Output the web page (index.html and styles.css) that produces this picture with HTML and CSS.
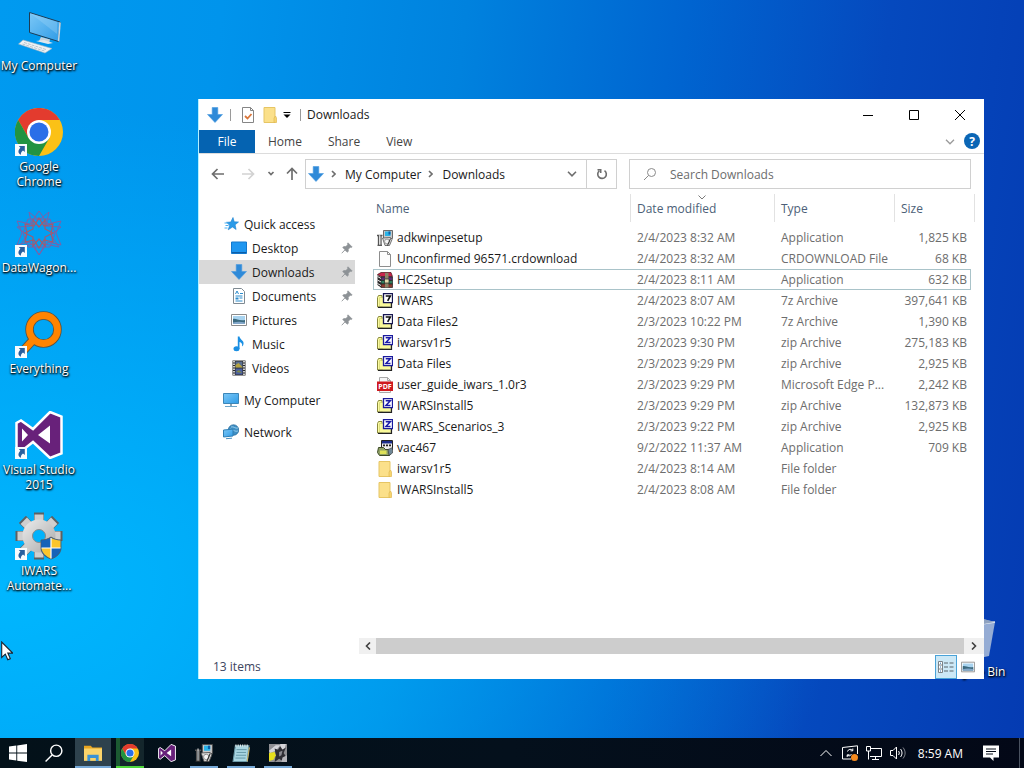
FILE: index.html
```html
<!DOCTYPE html>
<html lang="en">
  <head>
    <meta charset="UTF-8" />
    <meta name="viewport" content="width=device-width, initial-scale=1.0" />
    <title>Downloads</title>
    <link rel="stylesheet" href="styles.css">
  </head>
  <body>
    <!-- Shared icons -->
    <svg class="sprite" width="0" height="0" aria-hidden="true">
      <defs>
        <linearGradient id="screen" x1="0" y1="0" x2="1" y2="1">
          <stop offset="0" stop-color="#7cc8f7" />
          <stop offset="1" stop-color="#2f9be6" />
        </linearGradient>
        <linearGradient id="steel" x1="0" y1="0" x2="1" y2="1">
          <stop offset="0" stop-color="#e2e2e2" />
          <stop offset="1" stop-color="#b4b4b4" />
        </linearGradient>
      </defs>
      <symbol id="i-down" viewBox="0 0 16 16">
        <path d="M5.200 0.500h5.600v7h4.700L8 15.500 0.500 7.500h4.700z" fill="#2f8ad8" stroke="#4a9be0" stroke-width=".6" />
      </symbol>
      <symbol id="i-folder" viewBox="0 0 16 16">
        <path d="M2 0.500h11v15H2z" fill="#fbe08a" stroke="#e6c564" />
        <path d="M12 15.500V11l1.500-2 1 2v4.500z" fill="#f7d56e" stroke="#dfb954" stroke-width=".7" />
      </symbol>
      <symbol id="i-page" viewBox="0 0 16 16">
        <path d="M2.500 0.500h8l3 3v12h-11z" fill="#fdfdfd" stroke="#8d8d8d" />
        <path d="M10.500 0.500v3h3" fill="none" stroke="#8d8d8d" />
      </symbol>
      <symbol id="i-archive" viewBox="0 0 16 16">
        <path d="M0.500 4.500l1-2h3.500v11.500H0.500z" fill="#fbfba0" stroke="#8a8a3c" />
        <path d="M2.500 4.500h11v9h-11z" fill="#fafa9a" stroke="#c9c96c" stroke-width=".6" />
        <path d="M1 14.300h13.500V10" fill="none" stroke="#222" stroke-width="1.200" />
        <path d="M6.500 0.700h9v9h-9z" fill="#fff" stroke="currentColor" stroke-width="1.300" />
      </symbol>
      <symbol id="i-7z" viewBox="0 0 16 16">
        <use href="#i-archive" color="#161650" />
        <path d="M8.700 3h4.600L10.700 7.800" fill="none" stroke="#111" stroke-width="1.600" />
      </symbol>
      <symbol id="i-zip" viewBox="0 0 16 16">
        <use href="#i-archive" color="#1a1a9c" />
        <path d="M8.700 2.800h4.600L8.900 7.600h4.600" fill="none" stroke="#1a1aa8" stroke-width="1.500" />
      </symbol>
      <symbol id="i-setup" viewBox="0 0 16 16">
        <path d="M6.500 0.500h9v8h-9z" fill="#c8c8c8" stroke="#4b4b4b" stroke-width=".8" />
        <path d="M8 1.500h5.500v4.500H8z" fill="#2ab4e8" />
        <path d="M11.500 1.500h2v3h-2z" fill="#0b5ea8" />
        <path d="M0 5.500h5.500M1.500 5.500v9.500M4 5.500v9.500" fill="none" stroke="#555" stroke-width="1.300" />
        <path d="M2.700 4v11" stroke="#ddd" />
        <path d="M5.500 8l8-.5 1.500 2-2.500 6H8z" fill="#dcdcdc" stroke="#555" stroke-width=".8" />
        <circle cx="10" cy="11.500" r="2.400" fill="#f6f6f6" stroke="#888" stroke-width=".8" />
        <path d="M13.500 8.500l-3 7M0.500 15.300h4.500" fill="none" stroke="#333" />
      </symbol>
      <symbol id="i-rar" viewBox="0 0 16 16">
        <path d="M0.500 2.500L4 0.500h10l1.500 4H4z" fill="#c8234c" stroke="#411" stroke-width=".7" />
        <path d="M4 5h11.500v3.500H4z" fill="#5b2d72" stroke="#222" stroke-width=".7" />
        <path d="M4 8.500h11.500V12H4z" fill="#2f7d5c" stroke="#222" stroke-width=".7" />
        <path d="M4 12h11.500v3.500H4z" fill="#8a3a30" stroke="#222" stroke-width=".7" />
        <path d="M0.500 3L4 5v10.500L0.500 13z" fill="#262626" />
        <path d="M0.500 4.500l3.500 2M0.500 8l3.500 2M0.500 11.500l3.500 2" stroke="#eee" />
        <path d="M8 1h3.500v14.500H8z" fill="#8b8468" />
        <path d="M7.500 7h4.500v4H7.500z" fill="#e2dcae" stroke="#222" stroke-width=".7" />
      </symbol>
      <symbol id="i-vac" viewBox="0 0 16 16">
        <path d="M4.500 0.500h11v9h-11z" fill="#eee" stroke="#222" />
        <path d="M5 1h10v2.500H5z" fill="#1b2c8a" />
        <path d="M6 5.300h8.500" stroke="#222" stroke-width="1.800" stroke-dasharray="2 1" />
        <path d="M1.500 7.500h5l2 2h5.500v3l-1.500 3H2.500l-2-3z" fill="#8fa064" stroke="#3d4a26" />
        <path d="M3 10.500h6.500V14H3z" fill="#dfe25a" />
        <path d="M11 9.500l4.500-2V13L12 15.500z" fill="#6f8796" stroke="#333" stroke-width=".6" />
      </symbol>
      <symbol id="i-picture" viewBox="0 0 16 16">
        <path d="M0.500 2.500h15v11H0.500z" fill="#fff" stroke="#8b8b8b" />
        <path d="M2 4h12v8H2z" fill="#a8d3ef" />
        <path d="M2 7c3-1 5 2 12 1v4H2z" fill="#3c6a7f" />
        <path d="M2 10.500c4-1 8-1 12 0V12H2z" fill="#83a7c9" />
      </symbol>
      <symbol id="i-pin" viewBox="0 0 12 12">
        <path d="M7 0.800L11.200 5l-1 .6-.9-.3-2 2 .1 2-1.200 1L3.900 8 0.800 11.200 4 7.800 1.700 5.600l1-1.100 2.100.1 1.900-1.900-.3-1z" fill="#8d9296" stroke="#8d9296" stroke-width=".6" />
      </symbol>
      <symbol id="i-link" viewBox="0 0 12 12">
        <path d="M0 0h12v12H0z" fill="#f8fbfe" />
        <path d="M3.800 2h6v6L8 6.400C6.300 7.600 5.600 9 6 10.800 2.800 9.500 2.700 6.500 5.400 3.800z" fill="#2a5f9e" />
      </symbol>
      <symbol id="i-chrome" viewBox="0 0 48 48">
        <circle cx="24" cy="24" r="24" fill="#fbc116" />
        <path d="M24 12h20.800A24 24 0 0 0 3.200 12L13.600 30z" fill="#e33b2e" />
        <path d="M3.200 12A24 24 0 0 0 24 48L34.400 30 24 34 13.600 30z" fill="#229342" />
        <circle cx="24" cy="24" r="12" fill="#fff" />
        <circle cx="24" cy="24" r="9.500" fill="#2a6fe8" />
      </symbol>
      <symbol id="i-vs" viewBox="0 0 48 48">
        <path d="M35 1l11.500 4.500v37L35 47 18 31 6 40.500 1.500 38V12L6 9.500 18 18z" fill="#68217a" stroke="#fff" stroke-width="2.500" />
        <path d="M35 14.500v18L23 24zM7 17.500v13l6-6.500z" fill="#fff" />
      </symbol>
      <symbol id="i-computer" viewBox="0 0 16 16">
        <path d="M0.500 1.500h15v10H0.500z" fill="url(#screen)" stroke="#3c86b8" />
        <path d="M7 12h2v2H7z" fill="#8fa3b0" />
        <path d="M2 14.500h12" stroke="#70a6c8" />
      </symbol>
      <symbol id="i-tooth" viewBox="0 0 48 48">
        <path d="M19 0.500h10v11H19z" fill="#5d6062" />
        <path d="M19.500 2.500h9V12h-9z" fill="#cfcfcf" />
      </symbol>
    </svg>

    <main class="desktop">
      <!-- Desktop shortcuts -->
      <nav class="shortcuts">
        <a class="shortcut" href="#">
          <svg viewBox="0 0 48 48">
            <path d="M14.500 5.500l30.500 9.500-1.500 19.500L14.500 25.500z" fill="url(#screen)" stroke="#1d3c55" />
            <path d="M44.300 15l1.500.8-1.500 18.800-1.500-.6z" fill="#c9d8e2" />
            <path d="M15 6l27 21V15z" fill="#a8daf9" opacity=".3" />
            <path d="M26 30l9 2.500-1 4-10-2.500z" fill="#c7d3dc" />
            <path d="M21 34l12 3 5-1-9-3z" fill="#dfe7ec" />
            <path d="M8 33l29 8.500-7 4.500L3.500 37z" fill="#eef2f5" stroke="#9fb1bf" stroke-width=".6" />
            <path d="M9 35.500l22 7M7.500 37l22 7" stroke="#aab7c1" stroke-width=".8" stroke-dasharray="3 1" />
          </svg>
          <span>My Computer</span>
        </a>
        <a class="shortcut" href="#">
          <svg viewBox="0 0 48 48"><use href="#i-chrome" /><use href="#i-link" y="36" width="12" height="12" /></svg>
          <span>Google Chrome</span>
        </a>
        <a class="shortcut" href="#">
          <svg viewBox="0 0 48 48">
            <g fill="none" stroke="#7b62a8" stroke-width="1">
              <path d="M24 2l9 13 13-3-5 12 5 12-13-3-9 13-9-13-13 3 5-12-5-12 13 3z" />
              <path d="M2 18l15-1L14 3l10 8 10-8-3 14 15 1-10 8 8 12-14-3-6 11-6-11-14 3 8-12z" />
              <path d="M13 10h22l5 14-5 14H13L8 24z" />
            </g>
            <g fill="none" stroke="#a4596f" stroke-width="1.200">
              <path d="M24 9l5 8 9-2-2 9 2 9-9-2-5 8-5-8-9 2 2-9-2-9 9 2z" />
              <path d="M18 11l6 7 6-7 0 9 8 4-8 4v9l-6-7-6 7v-9l-8-4 8-4z" />
            </g>
            <use href="#i-link" y="36" width="12" height="12" />
          </svg>
          <span>DataWagon...</span>
        </a>
        <a class="shortcut" href="#">
          <svg viewBox="0 0 48 48">
            <path d="M18 30L7 42" stroke="#5c5340" stroke-width="9" />
            <circle cx="28.500" cy="19.500" r="14" fill="none" stroke="#5c5340" stroke-width="8.500" />
            <circle cx="28.500" cy="19.500" r="14" fill="none" stroke="#ff8400" stroke-width="6.800" />
            <path d="M20 28L7 42" stroke="#ff8400" stroke-width="7" />
            <use href="#i-link" y="36" width="12" height="12" />
          </svg>
          <span>Everything</span>
        </a>
        <a class="shortcut" href="#">
          <svg viewBox="0 0 48 48"><use href="#i-vs" /><use href="#i-link" y="36" width="12" height="12" /></svg>
          <span>Visual Studio 2015</span>
        </a>
        <a class="shortcut" href="#">
          <svg viewBox="0 0 48 48">
            <use href="#i-tooth" />
            <use href="#i-tooth" transform="rotate(45 24 24)" />
            <use href="#i-tooth" transform="rotate(90 24 24)" />
            <use href="#i-tooth" transform="rotate(135 24 24)" />
            <use href="#i-tooth" transform="rotate(180 24 24)" />
            <use href="#i-tooth" transform="rotate(225 24 24)" />
            <use href="#i-tooth" transform="rotate(270 24 24)" />
            <use href="#i-tooth" transform="rotate(315 24 24)" />
            <circle cx="24" cy="24" r="11.500" fill="none" stroke="url(#steel)" stroke-width="10" />
            <circle cx="24" cy="24" r="6.500" fill="none" stroke="#8a8a8a" />
            <path d="M36 25c3 2 6 3 10 3v8c0 5-4 9-10 11-6-2-10-6-10-11v-8c4 0 7-1 10-3z" fill="#1763b8" stroke="#555" stroke-width=".8" />
            <path d="M26.500 28.500c3.500 0 6.500-1 9.500-2.500v10h-9.500zM36 36h9.500c-.5 5-4.500 8.500-9.500 10.500z" fill="#1763b8" />
            <path d="M36 26c3 1.500 6 2.500 9.500 2.500V36H36zM36 36v10.500c-5-2-9-5.500-9.500-10.500z" fill="#fbc52d" />
            <path d="M36 26v20.500M26.500 36h19" stroke="#fff" stroke-width="1.200" />
            <use href="#i-link" y="36" width="12" height="12" />
          </svg>
          <span>IWARS Automate...</span>
        </a>
      </nav>

      <a class="shortcut recycle" href="#">
        <svg viewBox="0 0 48 48">
          <path d="M8 8l17-4 20 5-6 34-14 3-11-3z" fill="#b9c8dc" opacity=".8" />
          <path d="M8 8l17 4 20-3" fill="none" stroke="#e8eef6" stroke-width="1.500" />
          <path d="M25 4l20 5-17 3z" fill="#8fa2c0" />
        </svg>
        <span>Recycle Bin</span>
      </a>

      <!-- Explorer window -->
      <section class="window">
        <header class="titlebar">
          <svg class="icon"><use href="#i-down" /></svg>
          <span class="sep"></span>
          <button class="quick" aria-label="Properties">
            <svg class="icon" viewBox="0 0 16 16">
              <path d="M2.500 0.500h8l3 3v12h-11z" fill="#fff" stroke="#858585" />
              <path d="M10.500 0.500v3h3" fill="none" stroke="#858585" />
              <path d="M5 9l2.500 2.500L11.500 7" fill="none" stroke="#d9763a" stroke-width="1.800" />
            </svg>
          </button>
          <button class="quick" aria-label="New folder"><svg class="icon"><use href="#i-folder" /></svg></button>
          <button class="customize" aria-label="Customize toolbar">
            <svg width="8" height="6" viewBox="0 0 8 6"><path d="M0.500 0.500h7" stroke="#000" /><path d="M0.500 2.500h7L4 6z" /></svg>
          </button>
          <span class="sep"></span>
          <h1>Downloads</h1>
          <div class="controls">
            <button aria-label="Minimize"><svg width="10" height="10" viewBox="0 0 10 10"><path d="M0 5.500h10" /></svg></button>
            <button aria-label="Maximize"><svg width="10" height="10" viewBox="0 0 10 10"><path d="M0.500 0.500h9v9h-9z" /></svg></button>
            <button aria-label="Close"><svg width="10" height="10" viewBox="0 0 10 10"><path d="M0 0l10 10M10 0L0 10" /></svg></button>
          </div>
        </header>

        <div class="tabs">
          <button class="file-tab">File</button>
          <button>Home</button>
          <button>Share</button>
          <button>View</button>
          <button class="expand" aria-label="Expand the ribbon">
            <svg width="10" height="6" viewBox="0 0 10 6"><path d="M1 0.800l4 4 4-4" /></svg>
          </button>
          <button class="help" aria-label="Help">?</button>
        </div>

        <div class="navbar">
          <button class="nav" aria-label="Back"><svg width="14" height="12" viewBox="0 0 14 12"><path d="M13 6H1.500M6.500 1l-5 5 5 5" /></svg></button>
          <button class="nav off" aria-label="Forward"><svg width="14" height="12" viewBox="0 0 14 12"><path d="M1 6h11.500M7.500 1l5 5-5 5" /></svg></button>
          <button class="nav recent" aria-label="Recent locations"><svg width="8" height="6" viewBox="0 0 8 6"><path d="M1.500 1L4 3.500 6.500 1" /></svg></button>
          <button class="nav up" aria-label="Up"><svg width="12" height="14" viewBox="0 0 12 14"><path d="M6 13V1.500M1 6.500l5-5 5 5" /></svg></button>
          <div class="address">
            <svg class="icon"><use href="#i-down" /></svg>
            <svg class="crumb" width="5" height="8" viewBox="0 0 5 8"><path d="M1 1l3 3-3 3" /></svg>
            <a href="#">My Computer</a>
            <svg class="crumb" width="5" height="8" viewBox="0 0 5 8"><path d="M1 1l3 3-3 3" /></svg>
            <a href="#">Downloads</a>
            <button class="drop" aria-label="Previous locations"><svg width="10" height="6" viewBox="0 0 10 6"><path d="M1 0.800l4 4 4-4" /></svg></button>
            <button class="refresh" aria-label="Refresh">
              <svg width="12" height="12" viewBox="0 0 12 12"><path d="M8.500 2.600A4.300 4.300 0 1 1 3.300 2.800M1.500 1.700h3.200v3.200" /></svg>
            </button>
          </div>
          <div class="search">
            <svg width="14" height="14" viewBox="0 0 14 14"><circle cx="8.500" cy="5.500" r="4" /><path d="M5.500 8.500L1 13" /></svg>
            <input type="search" placeholder="Search Downloads" aria-label="Search Downloads" />
          </div>
        </div>

        <div class="content">
          <nav class="sidebar">
            <a class="root" href="#">
              <svg class="icon" viewBox="0 0 16 16">
                <path d="M10 1.500l1.200 4.300 4.300.2-3.400 2.800 1 4.700L9.500 11l-4.300 2.800 1.500-4.500L3.500 6.300l4.300-.3z" fill="#2b9be8" stroke="#1d80cc" stroke-width=".6" />
                <path d="M1.500 7h4M2.500 9.500h3M1.500 12h3" stroke="#4aaef0" />
              </svg>
              Quick access
            </a>
            <a href="#">
              <svg class="icon" viewBox="0 0 16 16"><path d="M0.500 2h15v11.500h-15z" fill="#1e96f0" stroke="#1478cc" /><path d="M1 12.500h14" stroke="#0d5ea8" /></svg>
              Desktop
              <svg class="pin"><use href="#i-pin" /></svg>
            </a>
            <a class="current" href="#">
              <svg class="icon"><use href="#i-down" /></svg>
              Downloads
              <svg class="pin"><use href="#i-pin" /></svg>
            </a>
            <a href="#">
              <svg class="icon" viewBox="0 0 16 16">
                <path d="M2.500 0.500h8l3 3v12h-11z" fill="#fff" stroke="#7f8a92" />
                <path d="M4.500 6L6 3l1.500 3M9 5.500h3M4.500 8h7M8.500 10h3M4.500 13h7" stroke="#2d8ccc" fill="none" />
                <path d="M4.500 9.500h3v2h-3z" fill="#2d8ccc" />
              </svg>
              Documents
              <svg class="pin"><use href="#i-pin" /></svg>
            </a>
            <a href="#">
              <svg class="icon"><use href="#i-picture" /></svg>
              Pictures
              <svg class="pin"><use href="#i-pin" /></svg>
            </a>
            <a href="#">
              <svg class="icon" viewBox="0 0 16 16">
                <ellipse cx="5.500" cy="12.800" rx="3" ry="2.500" fill="#1a8fe3" />
                <path d="M6.800 0.500h1.700c.5 3.300 4.800 4 4 7.500-.3 1.500-.8 2-1.500 2.500.7-2.500-.5-4-2.500-4.500v7H6.800z" fill="#1a8fe3" />
              </svg>
              Music
            </a>
            <a href="#">
              <svg class="icon" viewBox="0 0 16 16">
                <path d="M1.500 0.500h13v15h-13z" fill="#2b2b2b" />
                <path d="M3 1v14M13 1v14" stroke="#fff" stroke-width="1.500" stroke-dasharray="1.500 1" />
                <path d="M4.500 1.500h7v6h-7z" fill="#5a6f8f" />
                <path d="M4.500 5l3-2 4 4v.5h-7z" fill="#b6a33f" />
                <path d="M4.500 8.500h7v6h-7z" fill="#4a5fa0" />
                <path d="M5 12l3-2 3 3z" fill="#7d8a4a" />
              </svg>
              Videos
            </a>
            <a class="root place" href="#">
              <svg class="icon"><use href="#i-computer" /></svg>
              My Computer
            </a>
            <a class="root place" href="#">
              <svg class="icon" viewBox="0 0 16 16">
                <circle cx="10.500" cy="6" r="5.200" fill="#3f8fc4" stroke="#2a6f9f" stroke-width=".8" />
                <path d="M8 3c3-1 4 2 7 1M7 5c4 1 5 3 8 2" fill="none" stroke="#a9dbf5" stroke-width=".8" />
                <path d="M0.500 6l9.500-.8v6.800l-9.500 1z" fill="url(#screen)" stroke="#2f7fb5" />
                <path d="M3 14.700l6-.5" stroke="#4a90c0" />
              </svg>
              Network
            </a>
          </nav>

          <div class="files">
            <table>
              <colgroup>
                <col />
                <col class="col-date" />
                <col class="col-type" />
                <col class="col-size" />
                <col class="col-end" />
              </colgroup>
              <thead>
                <tr>
                  <th>Name</th>
                  <th class="sorted">
                    Date modified
                    <svg width="8" height="5" viewBox="0 0 8 5"><path d="M0.500 0.500L4 4 7.500 0.500" /></svg>
                  </th>
                  <th>Type</th>
                  <th colspan="2">Size</th>
                </tr>
              </thead>
              <tbody>
                <tr><td><svg class="icon"><use href="#i-setup" /></svg>adkwinpesetup</td><td>2/4/2023 8:32 AM</td><td>Application</td><td>1,825 KB</td></tr>
                <tr><td><svg class="icon"><use href="#i-page" /></svg>Unconfirmed 96571.crdownload</td><td>2/4/2023 8:32 AM</td><td>CRDOWNLOAD File</td><td>68 KB</td></tr>
                <tr class="focused"><td><svg class="icon"><use href="#i-rar" /></svg>HC2Setup</td><td>2/4/2023 8:11 AM</td><td>Application</td><td>632 KB</td></tr>
                <tr><td><svg class="icon"><use href="#i-7z" /></svg>IWARS</td><td>2/4/2023 8:07 AM</td><td>7z Archive</td><td>397,641 KB</td></tr>
                <tr><td><svg class="icon"><use href="#i-7z" /></svg>Data Files2</td><td>2/3/2023 10:22 PM</td><td>7z Archive</td><td>1,390 KB</td></tr>
                <tr><td><svg class="icon"><use href="#i-zip" /></svg>iwarsv1r5</td><td>2/3/2023 9:30 PM</td><td>zip Archive</td><td>275,183 KB</td></tr>
                <tr><td><svg class="icon"><use href="#i-zip" /></svg>Data Files</td><td>2/3/2023 9:29 PM</td><td>zip Archive</td><td>2,925 KB</td></tr>
                <tr>
                  <td>
                    <svg class="icon" viewBox="0 0 16 16">
                      <path d="M2.500 0.500h8l3 3v12h-11z" fill="#f6f6f6" stroke="#a9a9a9" />
                      <path d="M10.500 0.500v3h3" fill="none" stroke="#a9a9a9" />
                      <path d="M0 4.500h16V14H0z" fill="#cf1a1f" />
                      <text x="8" y="12" text-anchor="middle" class="pdf-tag">PDF</text>
                    </svg>user_guide_iwars_1.0r3
                  </td>
                  <td>2/3/2023 9:29 PM</td><td>Microsoft Edge P...</td><td>2,242 KB</td>
                </tr>
                <tr><td><svg class="icon"><use href="#i-zip" /></svg>IWARSInstall5</td><td>2/3/2023 9:29 PM</td><td>zip Archive</td><td>132,873 KB</td></tr>
                <tr><td><svg class="icon"><use href="#i-zip" /></svg>IWARS_Scenarios_3</td><td>2/3/2023 9:22 PM</td><td>zip Archive</td><td>2,925 KB</td></tr>
                <tr><td><svg class="icon"><use href="#i-vac" /></svg>vac467</td><td>9/2/2022 11:37 AM</td><td>Application</td><td>709 KB</td></tr>
                <tr><td><svg class="icon"><use href="#i-folder" /></svg>iwarsv1r5</td><td>2/4/2023 8:14 AM</td><td>File folder</td><td></td></tr>
                <tr><td><svg class="icon"><use href="#i-folder" /></svg>IWARSInstall5</td><td>2/4/2023 8:08 AM</td><td>File folder</td><td></td></tr>
              </tbody>
            </table>
            <div class="scrollbar">
              <button aria-label="Scroll left"><svg width="6" height="8" viewBox="0 0 6 8"><path d="M5 0.500L1.500 4 5 7.500" /></svg></button>
              <div class="thumb"></div>
              <button aria-label="Scroll right"><svg width="6" height="8" viewBox="0 0 6 8"><path d="M1 0.500L4.500 4 1 7.500" /></svg></button>
            </div>
          </div>
        </div>

        <footer class="status">
          <span>13 items</span>
          <button class="view active" aria-label="Details">
            <svg width="16" height="14" viewBox="0 0 16 14">
              <path d="M0.500 1.500h4v11h-4zM0.500 5h4M0.500 9h4" fill="#fff" stroke="#7a8288" />
              <path d="M2 3.200h1M2 7h1M2 11h1" stroke="#2d6fa8" />
              <path d="M6 3h4M11.500 3h4M6 7h4M11.500 7h4M6 11h4M11.500 11h4" stroke="#5b646b" />
            </svg>
          </button>
          <button class="view" aria-label="Large icons"><svg width="14" height="14"><use href="#i-picture" /></svg></button>
        </footer>
      </section>

      <svg class="cursor" viewBox="0 0 12 20"><path d="M0.700 1v15.500l3.600-3.400 2.500 5.600 2.500-1.100-2.500-5.500h4.900z" fill="#fff" stroke="#1b2430" stroke-width="1.100" /></svg>
    </main>

    <!-- Taskbar -->
    <footer class="taskbar">
      <button aria-label="Start">
        <svg viewBox="0 0 16 16" fill="#fff"><path d="M0 2.300l6.500-.9v6.200H0zM7.300 1.300L16 0v7.600H7.300zM0 8.400h6.500v6.200L0 13.700zM7.300 8.400H16V16l-8.700-1.200z" /></svg>
      </button>
      <button aria-label="Search">
        <svg viewBox="0 0 16 16" fill="none" stroke="#fff" stroke-width="1.300"><circle cx="10" cy="6" r="5" /><path d="M6.300 9.700L0.500 15.500" /></svg>
      </button>
      <div class="apps">
        <button class="open active" aria-label="File Explorer">
          <svg viewBox="0 0 16 16">
            <path d="M0 1.500h6l1.500 1.500H16v3H0z" fill="#e8a520" />
            <path d="M0 4h16v11H0z" fill="#fbd46a" />
            <path d="M3 9.500h10V15h-2.500v-2.500h-5V15H3z" fill="#3a92d4" />
          </svg>
        </button>
        <button class="open chrome" aria-label="Google Chrome"><svg><use href="#i-chrome" /></svg></button>
        <button aria-label="Visual Studio"><svg><use href="#i-vs" /></svg></button>
        <button class="open" aria-label="Setup"><svg><use href="#i-setup" /></svg></button>
        <button class="open" aria-label="Notepad">
          <svg viewBox="0 0 16 16">
            <path d="M3 1.500h12l-1.500 14H1z" fill="#a9d6e2" stroke="#6c9aa8" />
            <path d="M4 5h9M4 7.500h8.500M3.500 10h9M3 12.500h9" stroke="#5f93a3" stroke-width=".8" />
            <path d="M3 1.500h12" stroke="#e6eef0" stroke-width="2" stroke-dasharray="1 1" />
            <path d="M13.500 15.500L15.500 3" stroke="#c9b46a" />
          </svg>
        </button>
        <button class="open" aria-label="IWARS">
          <svg viewBox="0 0 16 16">
            <path d="M0 0h16v16H0z" fill="#8f8f93" />
            <path d="M0 6l6-5h4L6 6 1 8zM10 0h5l-1 4-4 1z" fill="#d6d6da" />
            <path d="M5 4l3 1 2-3 2 3 3-2-2 5 2 3-3 4-3-2-4 3 1-6z" fill="#2e2e34" />
            <path d="M0 8l5-1 1 3-2 4-4 1z" fill="#e8e01c" />
            <path d="M9 7l3-1-1 4-2 1z" fill="#8c8c93" />
            <path d="M12 12l4-2v6h-5z" fill="#b5b5ba" />
          </svg>
        </button>
      </div>
      <div class="tray">
        <button aria-label="Show hidden icons"><svg viewBox="0 0 16 16"><path d="M2.500 11L8 5.500 13.500 11" /></svg></button>
        <button aria-label="Updates">
          <svg viewBox="0 0 16 16">
            <path d="M9 14H0.500V2.500L15.500 0.800V9" />
            <path d="M10.800 5.500A3 3 0 0 0 5.500 6.500M5.300 10.500A3 3 0 0 0 9.500 9M10.800 3.500v2.300H8.500M5.200 12V9.800h2.300" />
            <circle cx="12.500" cy="12.500" r="3.500" fill="#f58a1f" stroke="none" />
          </svg>
        </button>
        <button aria-label="Network">
          <svg viewBox="0 0 16 16"><path d="M5 3.500h10.500v8H4M9.500 11.500v3M6 14.500h7M2.500 6v8.500M0.500 1.500h4V6h-4z" /></svg>
        </button>
        <button aria-label="Volume">
          <svg viewBox="0 0 16 16"><path d="M0.500 5.500h2.500L6.500 2v12L3 10.500H0.500zM8.500 6c1 1.300 1 2.700 0 4M10.500 4c2 2.500 2 5.500 0 8" /><path d="M13 2.500c2.800 3.500 2.800 7.500 0 11" opacity=".5" /></svg>
        </button>
        <time>8:59 AM</time>
        <button class="notify" aria-label="Notifications">
          <svg viewBox="0 0 16 16"><path d="M0 0.500h16v12h-5.500v3.500L7 12.500H0z" fill="#fff" stroke="none" /><path d="M3 4h10M3 6.500h10M3 9h7" stroke="#050c18" /></svg>
        </button>
        <button class="show-desktop" aria-label="Show desktop"></button>
      </div>
    </footer>
  </body>
</html>
```
FILE: styles.css
```css
* {
  box-sizing: border-box;
}
body {
  margin: 0;
  height: 100vh;
  display: flex;
  flex-direction: column;
  overflow: hidden;
  font-family: "Open Sans", "Noto Sans", sans-serif;
  font-size: 12px;
  line-height: 15px;
  color: #1a1a1a;
}
button {
  display: flex;
  align-items: center;
  justify-content: center;
  padding: 0;
  border: none;
  background: none;
  font: inherit;
  color: inherit;
}
a {
  color: inherit;
  text-decoration: none;
}
svg {
  display: block;
  flex: none;
}
.sprite {
  position: absolute;
}
.icon {
  width: 16px;
  height: 16px;
}
.pdf-tag {
  font-size: 7px;
  font-weight: bold;
  fill: #fff;
}

/* Desktop */
.desktop {
  position: relative;
  flex: 1;
  background:
    radial-gradient(ellipse at 0% 80%, rgba(0, 184, 255, 0.95), rgba(0, 174, 255, 0) 58%),
    linear-gradient(97deg, #009af0 0%, #0094ec 20%, #0082de 42%, #0064d0 62%, #0549be 80%, #053bb2 100%);
}
.shortcuts {
  display: grid;
  grid-auto-rows: 101px;
  width: 78px;
  padding-top: 7px;
}
.shortcut {
  display: flex;
  flex-direction: column;
  align-items: center;
  gap: 3px;
  color: #fff;
  text-align: center;
  text-shadow: 1px 1px 2px #000, 0 1px 2px #000;
}
.shortcut svg {
  width: 48px;
  height: 48px;
}
.recycle {
  position: absolute;
  right: 11px;
  bottom: 59px;
  width: 78px;
}
.cursor {
  position: absolute;
  left: 1px;
  bottom: 77px;
  width: 12px;
  height: 20px;
}

/* Window */
.window {
  position: absolute;
  top: 99px;
  right: 40px;
  bottom: 59px;
  left: 198px;
  display: flex;
  flex-direction: column;
  background: #fff;
  border-left: 1px solid #b4f0ff;
}
.titlebar {
  display: flex;
  align-items: center;
  height: 31px;
  padding-left: 8px;
}
.titlebar h1 {
  margin: 0 auto 0 0;
  font-size: 12px;
  font-weight: normal;
}
.sep {
  width: 1px;
  height: 12px;
  margin: 0 6px 0 7px;
  background: #9a9a9a;
}
.quick {
  width: 22px;
}
.customize {
  width: 12px;
}
.controls {
  display: flex;
  align-self: stretch;
  margin-right: 1px;
}
.controls button {
  width: 46px;
}
.controls path {
  fill: none;
  stroke: #000;
}

.tabs {
  display: flex;
  height: 24px;
  border-bottom: 1px solid #dcdcdc;
  color: #444;
}
.tabs button {
  padding: 0 13px;
}
.tabs .file-tab {
  width: 56px;
  background: #0563b1;
  color: #fff;
}
.tabs .expand {
  margin-left: auto;
  padding: 0 9px;
}
.expand path {
  fill: none;
  stroke: #9a9a9a;
  stroke-width: 1.3;
}
.tabs .help {
  width: 16px;
  height: 16px;
  margin: 3px 4px 0 0;
  padding: 0;
  border-radius: 50%;
  background: #0b66b5;
  color: #fff;
  font-weight: bold;
}

.navbar {
  display: flex;
  height: 40px;
  padding: 5px 13px 5px 4px;
}
.nav {
  width: 30px;
}
.nav path {
  fill: none;
  stroke: #6e6e6e;
  stroke-width: 1.7;
}
.off path {
  stroke: #d2d2d2;
}
.recent {
  width: 16px;
}
.up {
  width: 26px;
}
.address,
.search {
  display: flex;
  align-items: center;
  border: 1px solid #d0d0d0;
}
.address {
  width: 312px;
  margin-right: 12px;
  padding-left: 2px;
}
.crumb {
  margin: 0 9px 0 7px;
}
.crumb path,
.drop path,
.refresh path {
  fill: none;
  stroke: #6e6e6e;
  stroke-width: 1.6;
}
.drop {
  width: 28px;
  margin-left: auto;
}
.refresh {
  align-self: stretch;
  width: 30px;
  border-left: 1px solid #d0d0d0;
}
.search {
  flex: 1;
  padding-left: 13px;
}
.search svg {
  fill: none;
  stroke: #8a8a8a;
}
.search input {
  flex: 1;
  min-width: 0;
  padding: 0 0 0 13px;
  border: none;
  outline: none;
  background: none;
  font: inherit;
}
.search input::placeholder {
  color: #6d6d6d;
}

.content {
  display: flex;
  flex: 1;
  min-height: 0;
}
.sidebar {
  width: 156px;
  padding-top: 18px;
}
.sidebar a {
  display: flex;
  align-items: center;
  gap: 5px;
  height: 24px;
  padding: 0 2px 0 32px;
}
.sidebar .root {
  padding-left: 24px;
}
.sidebar .place {
  margin-top: 8px;
}
.sidebar .current {
  background: #d9d9d9;
}
.pin {
  width: 12px;
  height: 12px;
  margin-left: auto;
}

.files {
  display: flex;
  flex: 1;
  flex-direction: column;
  justify-content: space-between;
  min-width: 0;
  padding-left: 4px;
}
table {
  width: calc(100% - 23px);
  margin-left: 14px;
  table-layout: fixed;
  border-collapse: separate;
  border-spacing: 0;
}
.col-date {
  width: 144px;
}
.col-type {
  width: 120px;
}
.col-size {
  width: 76px;
}
.col-end {
  width: 4px;
}
th {
  position: relative;
  height: 28px;
  padding: 0 6px 0 3px;
  border-right: 1px solid #e2e2e2;
  font-weight: normal;
  text-align: left;
  color: #4c5f78;
}
th + th {
  padding-left: 6px;
}
.sorted svg {
  position: absolute;
  top: 1px;
  left: calc(50% - 4px);
  fill: none;
  stroke: #7a7a7a;
}
tbody::before {
  content: "";
  display: block;
  height: 5px;
}
td {
  height: 21px;
  padding: 0 6px;
  border: 1px solid transparent;
  border-width: 1px 0;
  line-height: 19px;
  color: #6d6d6d;
  white-space: nowrap;
}
td:first-child {
  padding-left: 4px;
  color: #1a1a1a;
}
td:nth-child(4) {
  padding: 0 4px 0 0;
  text-align: right;
}
td .icon {
  display: inline-block;
  margin-right: 4px;
  vertical-align: -4px;
}
.focused td {
  border-color: #a9c3c9;
}
.focused td:first-child {
  border-left: 1px solid #a9c3c9;
  padding-left: 3px;
}
.focused td:last-child {
  border-right: 1px solid #a9c3c9;
  padding-right: 3px;
}
.scrollbar {
  display: flex;
  height: 16px;
  background: #f0f0f0;
}
.scrollbar button {
  width: 17px;
}
.scrollbar button:last-child {
  width: 20px;
}
.scrollbar path {
  fill: none;
  stroke: #404040;
  stroke-width: 1.6;
}
.thumb {
  flex: 1;
  background: #cdcdcd;
}

.status {
  display: flex;
  align-items: center;
  height: 25px;
  padding: 0 5px 0 14px;
  color: #3c4560;
}
.status span {
  margin-right: auto;
}
.view {
  width: 22px;
  height: 24px;
}
.view.active {
  background: #cce8f6;
  border: 1px solid #4aa3d8;
}

/* Taskbar */
.taskbar {
  display: flex;
  height: 30px;
  background: linear-gradient(90deg, #031119, #04101c 50%, #030817);
  color: #fff;
}
.taskbar button {
  width: 36px;
}
.taskbar svg {
  width: 18px;
  height: 18px;
}
.apps {
  display: flex;
  gap: 1px;
  margin-left: 3px;
}
.apps .open {
  background: linear-gradient(#76a9d8, #76a9d8) center bottom / 28px 2px no-repeat;
}
.apps .active {
  background-color: #2e424d;
  background-size: 36px 2px;
}
.apps .chrome {
  background-image: linear-gradient(#4fd63c, #4fd63c), linear-gradient(90deg, #1c5a32 4px, #14262c 4px);
  background-size: 28px 2px, 28px 30px;
}
.tray {
  display: flex;
  align-items: center;
  margin-left: auto;
}
.tray button {
  width: 24px;
  height: 30px;
}
.tray svg {
  width: 16px;
  height: 16px;
  fill: none;
  stroke: #fff;
}
.tray time {
  margin: 0 8px;
}
.tray .notify {
  width: 40px;
}
.tray .show-desktop {
  width: 5px;
  margin-left: 8px;
  border-left: 1px solid #4a5260;
}
```
